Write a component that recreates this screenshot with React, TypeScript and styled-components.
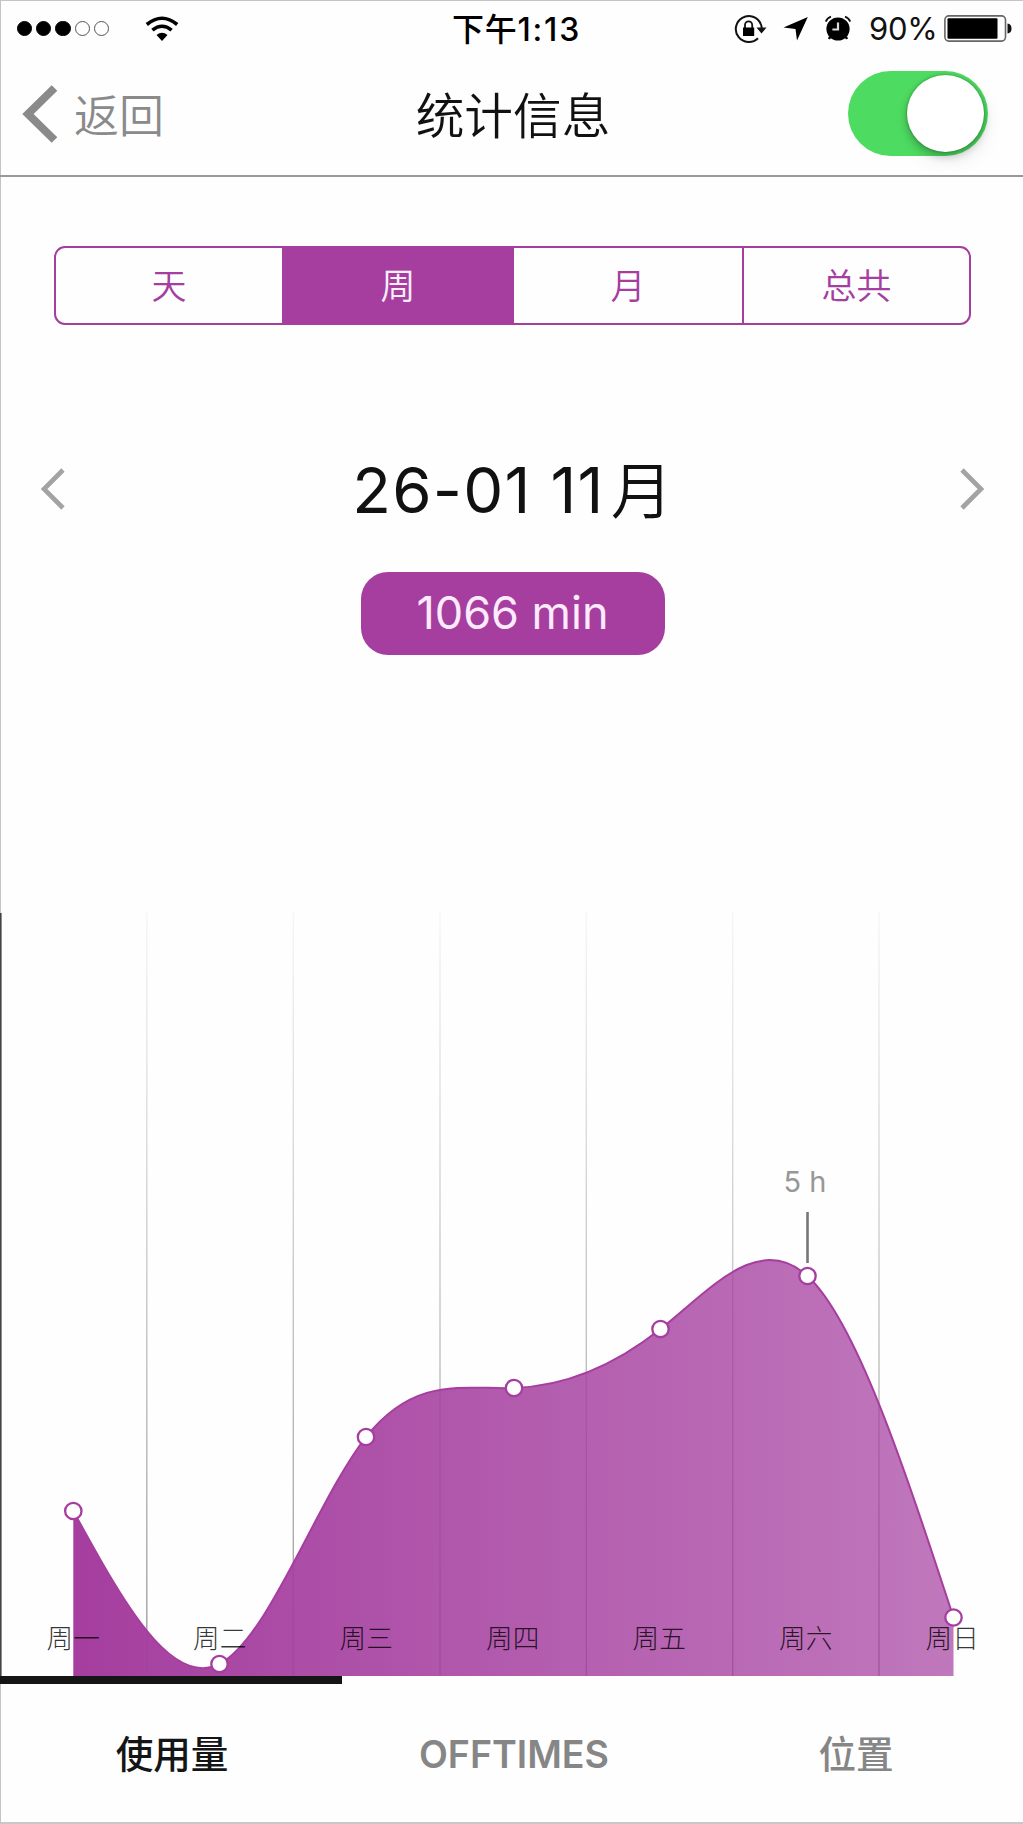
import React from "react";
import styled, { createGlobalStyle } from "styled-components";

const PURPLE = "#a53e9f";
const LATIN = `Inter, "Noto Sans CJK SC", sans-serif`;
const HAN = `"Noto Sans CJK SC", Inter, sans-serif`;

const Global = createGlobalStyle`
  *, *::before, *::after { box-sizing: border-box; }
  body { margin: 0; background: #fefefe; }
`;

const Screen = styled.main`
  width: 1023px;
  height: 1824px;
  display: flex;
  flex-direction: column;
  overflow: hidden;
  background: #fefefe;
  color: #111;
  font-family: ${LATIN};
  box-shadow: inset 1px 1px 0 #c4c4c4, inset 0 -2px 0 #c8c8c8;
`;

const StatusBar = styled.div`
  height: 55px;
  display: grid;
  grid-template-columns: 1fr 160px 1fr;
  align-items: center;
  padding: 0 11px 0 17px;
`;

const StatusLeft = styled.div`
  display: flex;
  align-items: center;
  gap: 36px;
`;

const SignalDots = styled.div`
  display: flex;
  gap: 4px;
`;

const Dot = styled.i<{ $on?: boolean }>`
  width: 15.2px;
  height: 15.2px;
  border-radius: 50%;
  border: 1.4px solid ${(p) => (p.$on ? "#000" : "#555")};
  background: ${(p) => (p.$on ? "#000" : "transparent")};
`;

const Clock = styled.time`
  display: flex;
  justify-content: center;
  white-space: nowrap;
  padding: 1px 0 0 4px;
  font: 500 32px/55px ${LATIN};
  letter-spacing: 1.8px;
  color: #000;
`;

const Meridiem = styled.span`
  font-size: 32px;
  letter-spacing: 0.8px;
`;

const StatusRight = styled.div`
  display: flex;
  align-items: center;
  justify-content: flex-end;
`;

const IconSlot = styled.span<{ $gap: number }>`
  display: flex;
  margin-right: ${(p) => p.$gap}px;
`;

const Percent = styled.span`
  font: 400 31px/57px ${LATIN};
  letter-spacing: -0.3px;
  width: 66px;
  margin-right: 9px;
  white-space: nowrap;
  color: #111;
`;

const NavBar = styled.header`
  height: 122px;
  padding: 0 35px 4px 22px;
  border-bottom: 2px solid #999;
  display: grid;
  grid-template-columns: 1fr 220px 1fr;
  align-items: center;
`;

const BackButton = styled.button`
  border: 0;
  background: none;
  padding: 1px 0 0;
  display: flex;
  align-items: center;
  gap: 16px;
  color: #8a8a8a;
  font: 350 45px/60px ${HAN};
`;

const Title = styled.h1`
  margin: 0 -8px 0 8px;
  text-align: center;
  white-space: nowrap;
  font: 350 48.7px/64px ${HAN};
  color: #111;
`;

const Switch = styled.button`
  justify-self: end;
  width: 140px;
  height: 85px;
  padding: 4px;
  border: 0;
  border-radius: 43px;
  background: #4edb62;
  display: flex;
  justify-content: flex-end;
`;

const Knob = styled.span`
  width: 77px;
  height: 77px;
  border-radius: 50%;
  background: #fff;
  box-shadow: 0 4px 8px rgba(0, 0, 0, 0.24), 0 0 2px 1px rgba(0, 60, 0, 0.2),
    3px 9px 18px rgba(0, 0, 0, 0.08);
`;

const Segments = styled.div`
  margin: 69px 52px 0 54px;
  height: 79px;
  border: 2px solid ${PURPLE};
  border-radius: 11px;
  display: grid;
  grid-template-columns: 226px 232px 230px 1fr;
  overflow: hidden;
`;

const Segment = styled.button<{ $active?: boolean; $divider?: boolean }>`
  border: 0;
  border-right: ${(p) => (p.$divider ? `2px solid ${PURPLE}` : "0")};
  padding: 0 0 3px;
  background: ${(p) => (p.$active ? PURPLE : "transparent")};
  color: ${(p) => (p.$active ? "#fdeefd" : PURPLE)};
  font: 350 35px/72px ${HAN};
`;

const Period = styled.section`
  height: 247px;
  padding: 0 36px 0 38px;
  margin-top: 124px;
  display: grid;
  grid-template-columns: 30px 1fr 30px;
  grid-template-rows: 80px 83px;
  row-gap: 43px;
  align-items: center;
`;

const ArrowButton = styled.button`
  border: 0;
  background: none;
  padding: 0;
  display: flex;
  justify-content: center;
`;

const DateLabel = styled.h2`
  margin: 2px 0 0;
  display: flex;
  justify-content: center;
  white-space: pre;
  font: 400 63.5px/80px ${LATIN};
  letter-spacing: 1.2px;
  color: #111;
`;

const Month = styled.span`
  font: 350 62px/74px ${HAN};
  letter-spacing: 0;
  margin-left: 6px;
`;

const Total = styled.div`
  grid-column: 2;
  justify-self: center;
  width: 304px;
  height: 83px;
  border-radius: 27px;
  background: ${PURPLE};
  color: #fdeafd;
  text-align: center;
  font: 400 45px/82px ${LATIN};
`;

const Chart = styled.section`
  position: relative;
  margin-top: auto;
  height: 764px;
  flex: none;
`;

const Plot = styled.svg`
  display: block;
`;

const Weekdays = styled.div`
  position: absolute;
  inset: auto auto 19px 0;
  display: grid;
  grid-template-columns: repeat(7, 146.5px);
`;

const Weekday = styled.span`
  text-align: center;
  font: 300 26.7px/40px ${HAN};
  color: rgba(0, 0, 0, 0.8);
`;

const PeakLabel = styled.span`
  position: absolute;
  left: 765px;
  top: 250px;
  width: 80px;
  text-align: center;
  font: 400 29px/40px ${LATIN};
  color: #979797;
`;

const TabBar = styled.nav`
  flex: none;
  height: 148px;
  padding-left: 1px;
  display: grid;
  grid-template-columns: repeat(3, 342px);
`;

const Tab = styled.button<{ $active?: boolean }>`
  border: 0;
  border-top: 8px solid ${(p) => (p.$active ? "#151515" : "transparent")};
  margin: ${(p) => (p.$active ? "0 1px 0 -1px" : "0")};
  padding: 1px 0 0 ${(p) => (p.$active ? "2px" : "0")};
  background: none;
  color: ${(p) => (p.$active ? "#151515" : "#868686")};
  font: 500 37.5px/50px ${LATIN};
`;

const TabText = styled.span<{ $latin?: boolean }>`
  font-weight: ${(p) => (p.$latin ? 600 : 500)};
  font-size: 37.6px;
`;

const Wifi = () => (
  <svg width="34" height="26" viewBox="0 0 34 26" fill="none" stroke="#000" strokeWidth="3.6">
    <path d="M1.8 8.5Q17 -4 32.2 8.5" />
    <path d="M7.4 14.2Q17 6.3 26.6 14.2" />
    <path d="M11.5 19Q17 14.5 22.5 19L17 25Z" fill="#000" stroke="none" />
  </svg>
);

const RotationLock = () => (
  <svg width="33" height="30" viewBox="0 0 33 30" fill="none" stroke="#111">
    <path d="M26.8 10A13 13 0 1 0 24 24.2" strokeWidth="2" />
    <path d="M26.8 10Q27.6 12 27.7 14" strokeWidth="2" />
    <path d="M22.5 13.5H32.5L27.5 19.5Z" fill="#111" stroke="none" />
    <path d="M11 14V11a3.6 3.6 0 0 1 7.2 0v3" strokeWidth="1.8" />
    <rect x="9" y="13.5" width="11.2" height="8.5" fill="#000" stroke="none" />
  </svg>
);

const LocationArrow = () => (
  <svg width="26" height="25" viewBox="0 0 26 25">
    <path d="M24.8 1L14 24.5L12.5 13L0.5 11.5Z" fill="#000" />
  </svg>
);

const Alarm = () => (
  <svg width="28" height="27" viewBox="0 0 28 27" fill="none">
    <circle cx="14" cy="14" r="11.6" fill="#000" />
    <path d="M1.8 6.6Q3 3 7 1.6M26.2 6.6Q25 3 21 1.6" stroke="#111" strokeWidth="1.8" />
    <path d="M14 7.5V14.5H8.4" stroke="#ddd" strokeWidth="2.2" />
    <path d="M6 22L5 24M22 22L23 24" stroke="#000" strokeWidth="2.4" />
  </svg>
);

const Battery = () => (
  <svg width="68" height="27" viewBox="0 0 68 27">
    <rect x="0.9" y="0.9" width="60.6" height="25.2" rx="4" fill="none" stroke="#666" strokeWidth="1.6" />
    <rect x="3.5" y="3.3" width="50" height="20.4" rx="1" fill="#000" />
    <path d="M63.5 8.5Q67.5 9 67.5 13.5T63.5 18.5Z" fill="#111" />
  </svg>
);

const Chevron = ({ flip = false }: { flip?: boolean }) => (
  <svg width="26" height="44" viewBox="0 0 26 44" fill="none">
    <path
      d={flip ? "M3 3L22 22L3 41" : "M23 3L4 22L23 41"}
      stroke="#a3a3a3"
      strokeWidth="4.6"
    />
  </svg>
);

const BASE = 764;
const points: [number, number][] = [
  [73.3, 599],
  [219.5, 752],
  [366, 525],
  [514, 476],
  [660.5, 417],
  [807.5, 364],
  [953.5, 705.5],
];
const gridLines = [146.8, 293.3, 440, 586.3, 732.7, 879];

/** Natural cubic spline through evenly spaced points, as an SVG path. */
function splinePath(pts: [number, number][]) {
  const n = pts.length;
  const y = pts.map((p) => p[1]);
  const c: number[] = [0.5];
  const d: number[] = [(3 * (y[1] - y[0])) / 2];
  for (let i = 1; i < n; i++) {
    const last = i === n - 1;
    const rhs = last ? 3 * (y[i] - y[i - 1]) : 3 * (y[i + 1] - y[i - 1]);
    const w = (last ? 2 : 4) - c[i - 1];
    c.push(1 / w);
    d.push((rhs - d[i - 1]) / w);
  }
  const m = [...d];
  for (let i = n - 2; i >= 0; i--) m[i] = d[i] - c[i] * m[i + 1];
  let path = `M${pts[0][0]} ${pts[0][1]}`;
  for (let i = 0; i < n - 1; i++) {
    const [x0, y0] = pts[i];
    const [x1, y1] = pts[i + 1];
    const h = (x1 - x0) / 3;
    path += `C${x0 + h} ${y0 + m[i] / 3} ${x1 - h} ${y1 - m[i + 1] / 3} ${x1} ${y1}`;
  }
  return path;
}

const UsagePlot = () => {
  const curve = splinePath(points);
  return (
    <Plot width="1023" height="764" viewBox="0 0 1023 764">
      <defs>
        <linearGradient id="area" gradientUnits="userSpaceOnUse" x1="73" y1="0" x2="953" y2="0">
          <stop offset="0" stopColor={PURPLE} />
          <stop offset="1" stopColor={PURPLE} stopOpacity="0.7" />
        </linearGradient>
        <linearGradient id="grid" x1="0" y1="0" x2="0" y2="1">
          <stop offset="0" stopColor="#999" stopOpacity="0.08" />
          <stop offset="0.5" stopColor="#999" stopOpacity="0.55" />
          <stop offset="1" stopColor="#888" stopOpacity="0.85" />
        </linearGradient>
      </defs>
      <rect x="0" y="1" width="1.6" height={BASE} fill="#444" />
      {gridLines.map((x) => (
        <rect key={x} x={x - 0.7} y="0" width="1.4" height={BASE} fill="url(#grid)" />
      ))}
      <path d={`${curve}V${BASE}H${points[0][0]}Z`} fill="url(#area)" />
      <path d={curve} fill="none" stroke={PURPLE} strokeWidth="2" />
      <path d="M807.5 300V351" stroke="#777" strokeWidth="2.6" />
      {points.map(([x, y]) => (
        <circle key={x} cx={x} cy={y} r="8.2" fill="#fff" stroke={PURPLE} strokeWidth="2.3" />
      ))}
    </Plot>
  );
};

export default function App() {
  return (
    <Screen>
      <Global />
      <StatusBar>
        <StatusLeft>
          <SignalDots>
            <Dot $on />
            <Dot $on />
            <Dot $on />
            <Dot />
            <Dot />
          </SignalDots>
          <Wifi />
        </StatusLeft>
        <Clock>
          <Meridiem>下午</Meridiem>1:13
        </Clock>
        <StatusRight>
          <IconSlot $gap={16}>
            <RotationLock />
          </IconSlot>
          <IconSlot $gap={15}>
            <LocationArrow />
          </IconSlot>
          <IconSlot $gap={17}>
            <Alarm />
          </IconSlot>
          <Percent>90%</Percent>
          <Battery />
        </StatusRight>
      </StatusBar>
      <NavBar>
        <BackButton>
          <svg width="36" height="58" viewBox="0 0 36 58" fill="none">
            <path d="M32.5 3L6 29L32.5 55" stroke="#8a8a8a" strokeWidth="8" />
          </svg>
          返回
        </BackButton>
        <Title>统计信息</Title>
        <Switch role="switch" aria-checked="true">
          <Knob />
        </Switch>
      </NavBar>
      <Segments>
        <Segment>天</Segment>
        <Segment $active>周</Segment>
        <Segment $divider>月</Segment>
        <Segment>总共</Segment>
      </Segments>
      <Period>
        <ArrowButton>
          <Chevron />
        </ArrowButton>
        <DateLabel>
          26-01 11<Month>月</Month>
        </DateLabel>
        <ArrowButton>
          <Chevron flip />
        </ArrowButton>
        <Total>1066 min</Total>
      </Period>
      <Chart>
        <UsagePlot />
        <Weekdays>
          {["周一", "周二", "周三", "周四", "周五", "周六", "周日"].map((d) => (
            <Weekday key={d}>{d}</Weekday>
          ))}
        </Weekdays>
        <PeakLabel>5 h</PeakLabel>
      </Chart>
      <TabBar>
        <Tab $active>
          <TabText>使用量</TabText>
        </Tab>
        <Tab>
          <TabText $latin>OFFTIMES</TabText>
        </Tab>
        <Tab>
          <TabText>位置</TabText>
        </Tab>
      </TabBar>
    </Screen>
  );
}
